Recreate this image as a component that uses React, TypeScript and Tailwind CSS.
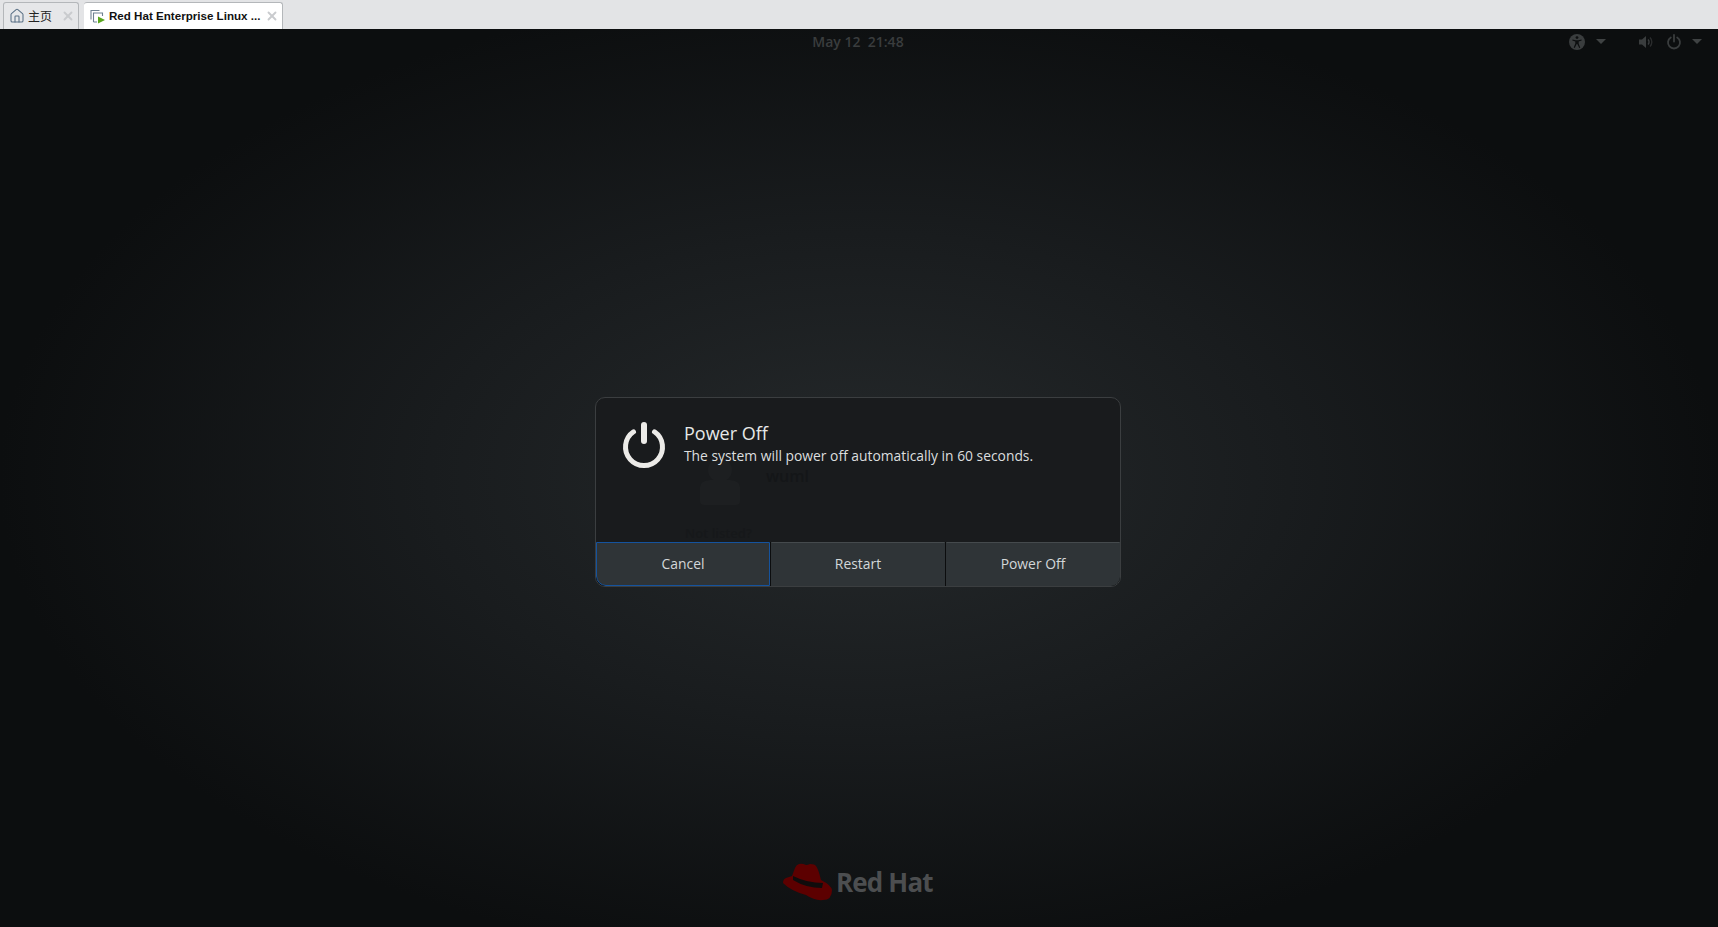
import { X, Home } from 'lucide-react';

const sans = 'font-["Liberation_Sans",Arial,"Noto_Sans_CJK_SC",sans-serif]';

function Caret() {
  return (
    <svg width="10" height="5" viewBox="0 0 10 5" className="block shrink-0">
      <path d="M0 0h10L5 5z" fill="#3f4243" />
    </svg>
  );
}

function TabStrip() {
  return (
    <div className={`flex h-[29px] shrink-0 items-end gap-[5px] bg-[#e3e4e6] pl-[3px] pr-[1px] ${sans}`}>
      <div className="flex h-[27px] w-[76px] items-center rounded-t-[3px] border border-b-0 border-[#b4b7ba] bg-[#e6e7e9] pl-[5px] pr-[3px]">
        <Home size={16} strokeWidth={1.6} className="text-[#5b7186]" />
        <span className="ml-[3px] text-[12px] text-[#222] font-['Noto_Sans_CJK_SC',sans-serif]">主页</span>
        <X size={14} strokeWidth={3.2} className="ml-auto text-[#c9cbce]" />
      </div>
      <div className="flex h-[27px] w-[199px] items-center rounded-t-[3px] border-r border-t border-[#b4b7ba] bg-white pl-[6px] pr-[3px]">
        <svg width="16" height="15" viewBox="0 0 16 15" className="shrink-0">
          <path d="M1 10.5V1.5h8.5M3.5 13V4h9v3M3.5 13H7" fill="none" stroke="#6d8091" strokeWidth="1.1" />
          <path d="M8 7.5l7 3.5-7 3.5z" fill="#5aa51f" />
        </svg>
        <span className="ml-[3px] text-[11.6px] font-bold whitespace-nowrap text-[#111]">Red Hat Enterprise Linux ...</span>
        <X size={14} strokeWidth={3.2} className="ml-auto text-[#c9cbce]" />
      </div>
    </div>
  );
}

function TopBar() {
  return (
    <div className="grid h-[25px] shrink-0 grid-cols-3 items-center font-['Open_Sans',sans-serif]">
      <div />
      <div className="pr-[2px] text-center text-[14px] font-semibold text-[#3a3d3e]">May 12&nbsp; 21:48</div>
      <div className="flex items-center justify-end pr-[16px]">
        <svg width="16" height="16" viewBox="0 0 16 16">
          <circle cx="8" cy="8" r="8" fill="#3a3d3e" />
          <circle cx="8" cy="3.6" r="1.4" fill="#0d0f10" />
          <path d="M3.5 5.5l3.2.8h2.6l3.2-.8.2 1-3 1v2.2l1.6 4-1 .4L8.3 10h-.6l-2 3.9-1-.4 1.6-4V7.5l-3-1z" fill="#0d0f10" />
        </svg>
        <span className="ml-[11px]"><Caret /></span>
        <svg width="16" height="16" viewBox="0 0 16 16" className="ml-[32px]">
          <path d="M1 5.5h3L8 2v12l-4-3.5H1z" fill="#3a3d3e" />
          <path d="M10 5.5a3.5 3.5 0 0 1 0 5" fill="none" stroke="#3a3d3e" strokeWidth="1.4" />
          <path d="M12 3.5a6.5 6.5 0 0 1 0 9" fill="none" stroke="#2a2c2d" strokeWidth="1.4" />
        </svg>
        <svg width="16" height="16" viewBox="0 0 16 16" className="ml-[12px]">
          <path d="M4.8 3.4a6 6 0 1 0 6.4 0" fill="none" stroke="#3a3d3e" strokeWidth="1.8" strokeLinecap="round" />
          <path d="M8 1v6.5" stroke="#3a3d3e" strokeWidth="1.8" strokeLinecap="round" />
        </svg>
        <span className="ml-[10px]"><Caret /></span>
      </div>
    </div>
  );
}

function DialogButton({ label, focused }: { label: string; focused?: boolean }) {
  return (
    <button
      className={
        focused
          ? 'flex-1 rounded-bl-[10px] border border-[#15539e] bg-[#2f3437] text-[13.9px] text-[#d3d7d9]'
          : 'flex-1 border border-transparent border-t-[#454a4d] bg-[#2f3437] text-[13.9px] text-[#d3d7d9]'
      }
    >
      {label}
    </button>
  );
}

function PowerDialog() {
  return (
    <div className="ml-[595px] mt-[343px] flex h-[190px] w-[526px] shrink-0 flex-col overflow-hidden rounded-[10px] border border-[#3b3e40] bg-[#191b1d] font-['Open_Sans',sans-serif]">
      <div className="relative flex flex-1 pl-[26px] pt-[23px]">
        <svg width="44" height="48" viewBox="0 0 44 48" className="shrink-0">
          <path d="M11.5 10.8A18.5 18.5 0 1 0 32.5 10.8" fill="none" stroke="#ecebe8" strokeWidth="5" strokeLinecap="round" />
          <path d="M22 4v16" stroke="#ecebe8" strokeWidth="6" strokeLinecap="round" />
        </svg>
        <div className="relative z-10 ml-[18px] mt-[1px] flex flex-col">
          <div className="text-[18px] leading-[23px] text-[#e6e8e8]">Power Off</div>
          <div className="text-[13.85px] leading-[21px] text-[#dcdedf]">The system will power off automatically in 60 seconds.</div>
        </div>
        {/* login screen showing through the modal */}
        <svg width="40" height="44" viewBox="0 0 40 44" className="absolute left-[104px] top-[63px]">
          <circle cx="20" cy="9" r="12" fill="#1d1f21" />
          <path d="M0 40V26q0-6 10-7h20q10 1 10 7v14q0 4-4 4H4q-4 0-4-4z" fill="#1d1f21" />
        </svg>
        <span className="absolute left-[170px] top-[67px] text-[16px] font-semibold leading-[22px] text-[#141618]">wuml</span>
        <span className="absolute left-[89px] top-[129px] text-[13px] font-semibold leading-none text-[#16181a]">Not listed?</span>
      </div>
      <div className="flex h-[44px] shrink-0 gap-px bg-[#0c0d0e]">
        <DialogButton label="Cancel" focused />
        <DialogButton label="Restart" />
        <DialogButton label="Power Off" />
      </div>
    </div>
  );
}

function RedHatLogo() {
  return (
    <div className="mb-[26px] ml-[783px] mt-auto flex items-center">
      <svg width="50" height="38" viewBox="0 0 50 38" className="shrink-0">
        <path d="M16 1q3-1 7 1 2 0 4-1 5 0 6 2 2 2 5 14 10 5 11 10 0 10-9 10-8 1-17-5Q8 28 0 20q0-4 3-5l6-2 3-8q1-3 4-4z" fill="#5c0000" />
        <path d="M10 13q14 7 30 7l-1 5q-16 0-29-8z" fill="#0f0c0c" />
      </svg>
      <span className="ml-[3px] font-['Open_Sans',sans-serif] text-[26px] font-bold leading-none tracking-[-0.85px] text-[#4c4e50]">Red Hat</span>
    </div>
  );
}

export default function App() {
  return (
    <div className="flex h-[927px] w-[1718px] flex-col overflow-hidden bg-[#0d0f10]">
      <TabStrip />
      <div className="flex flex-1 flex-col bg-[radial-gradient(ellipse_860px_490px_at_50%_50%,#25292b_0%,#191c1e_50%,#0c0e0f_100%)]">
        <TopBar />
        <PowerDialog />
        <RedHatLogo />
      </div>
    </div>
  );
}
